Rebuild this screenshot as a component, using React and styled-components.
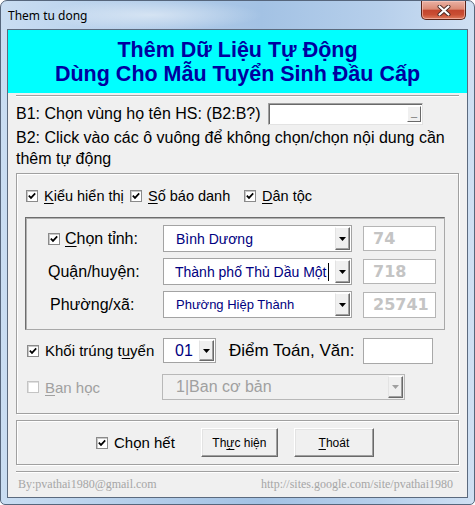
import styled, { createGlobalStyle } from 'styled-components'

const GlobalStyle = createGlobalStyle`
  html, body {
    margin: 0;
    padding: 0;
    background: #ffffff;
  }
  body {
    width: 475px;
    height: 505px;
    overflow: hidden;
    font-family: "Liberation Sans", Arial, sans-serif;
  }
`

const Window = styled.div`
  width: 475px;
  height: 505px;
  box-sizing: border-box;
  border: 1px solid #56667c;
  border-radius: 7px 7px 5px 5px;
  background:
    radial-gradient(ellipse 160px 22px at 150px 14px, rgba(255, 255, 255, 0.45), rgba(255, 255, 255, 0) 70%),
    linear-gradient(to right, #c9ddf2 0%, #b7d0eb 25%, #a3c2e4 55%, #b6cfeb 80%, #cfe0f3 100%);
  display: flex;
  flex-direction: column;
  overflow: hidden;
`

const TitleBar = styled.div`
  height: 28px;
  display: flex;
  align-items: flex-start;
  padding-left: 7px;
`

const TitleText = styled.div`
  font-family: "Noto Sans", "Open Sans", sans-serif;
  font-size: 12px;
  line-height: 16px;
  margin-top: 7px;
  color: #000;
`

const CloseButton = styled.div`
  margin-left: auto;
  margin-right: 8px;
  width: 45px;
  height: 19px;
  box-sizing: border-box;
  border: 1px solid #5a2418;
  border-top: none;
  border-radius: 0 0 5px 5px;
  background: linear-gradient(#eab1a4 0%, #dc8a74 45%, #c3452d 52%, #c94e33 75%, #de7c5e 100%);
  box-shadow: inset 0 0 0 1px rgba(255, 210, 200, 0.55);
  display: flex;
  align-items: center;
  justify-content: center;
`

const Client = styled.div`
  flex: 1;
  margin: 0 6px 6px;
  border: 1px solid #5b6a7e;
  background: #f0f0f0;
  display: flex;
  flex-direction: column;
`

const Banner = styled.div`
  background: #00ffff;
  padding: 8px 0 7px;
  text-align: center;
  color: #0000a0;
  font-weight: bold;
  font-size: 21.5px;
  line-height: 24px;
`

const Etched = styled.div`
  height: 0;
  border-top: 1px solid #a0a0a0;
  border-bottom: 1px solid #ffffff;
  margin: ${p => p.$top || 0}px 8px 0;
`

const Body = styled.div`
  padding: 0 8px;
  display: flex;
  flex-direction: column;
`

const B1Row = styled.div`
  margin-top: 6px;
  height: 22px;
  display: flex;
  align-items: center;
  font-size: 16px;
  color: #000;
`

const RangeInput = styled.div`
  margin-left: auto;
  margin-right: 36px;
  width: 155px;
  height: 22px;
  box-sizing: border-box;
  background: #fff;
  border: 1px solid;
  border-color: #a0a0a0 #e3e3e3 #e3e3e3 #a0a0a0;
  box-shadow: inset 1px 1px 0 #696969;
  display: flex;
  justify-content: flex-end;
  align-items: center;
  padding-right: 1px;
`

const SmallButton = styled.div`
  width: 14px;
  height: 16px;
  box-sizing: border-box;
  background: #f0f0f0;
  border: 1px solid;
  border-color: #ffffff #696969 #696969 #ffffff;
  font-size: 11px;
  font-weight: bold;
  line-height: 10px;
  text-align: center;
  color: #000;
`

const Note = styled.div`
  margin-top: 2px;
  font-size: 16px;
  line-height: 21px;
  color: #000;
`

const Frame = styled.div`
  margin-top: ${p => p.$top}px;
  height: ${p => p.$height}px;
  box-sizing: border-box;
  border: 1px solid #a0a0a0;
  box-shadow: inset 1px 1px 0 #ffffff, 1px 1px 0 #ffffff;
  display: flex;
  flex-direction: ${p => (p.$row ? 'row' : 'column')};
  align-items: ${p => (p.$row ? 'center' : 'stretch')};
  padding: ${p => p.$pad};
`

const CheckRow = styled.div`
  height: 18px;
  display: flex;
  align-items: center;
`

const CheckLabel = styled.label`
  display: flex;
  align-items: center;
  gap: ${p => p.$gap || 6}px;
  width: ${p => (p.$width ? `${p.$width}px` : 'auto')};
  flex-shrink: 0;
  font-size: ${p => p.$size || 16}px;
  color: ${p => (p.$disabled ? '#a0a0a0' : '#000')};
  white-space: nowrap;
`

const Box = styled.span`
  width: 12px;
  height: 12px;
  box-sizing: border-box;
  flex-shrink: 0;
  background: #fff;
  border: 1px solid ${p => (p.$disabled ? '#c4c4c4' : '#8a8a8a')};
  box-shadow: inset 1px 1px 0 ${p => (p.$disabled ? '#e0e0e0' : '#c8c8c8')};
  display: flex;
  align-items: center;
  justify-content: center;
`

const Key = styled.span`
  text-decoration: underline;
  text-underline-offset: 2px;
  text-decoration-thickness: 1px;
`

const InnerFrame = styled.div`
  margin: 12px 0 0 -1px;
  width: 420px;
  height: 113px;
  box-sizing: border-box;
  border: 1px solid;
  border-color: #6d6d6d #a8a8a8 #a8a8a8 #6d6d6d;
  box-shadow: inset 1px 1px 0 #b0b0b0;
  padding: 7px 0 0 22px;
  display: grid;
  grid-template-columns: 104px 189px 73px;
  grid-auto-rows: 27px;
  column-gap: 11px;
  row-gap: 6px;
  align-items: center;
`

const FieldLabel = styled.div`
  font-size: 16px;
  color: #000;
  padding-left: ${p => p.$indent || 0}px;
  white-space: nowrap;
`

const Combo = styled.div`
  width: ${p => (p.$width ? `${p.$width}px` : 'auto')};
  height: ${p => p.$height || 27}px;
  box-sizing: border-box;
  flex-shrink: 0;
  background: ${p => (p.$disabled ? '#f0f0f0' : '#fff')};
  border: 1px solid ${p => (p.$disabled ? '#b8b8b8' : '#a3a3a3')};
  display: flex;
  align-items: center;
  padding: 1px;
`

const ComboText = styled.div`
  flex: 1;
  padding-left: ${p => p.$pad || 11}px;
  font-size: ${p => p.$size || 14}px;
  color: ${p => (p.$disabled ? '#a0a0a0' : '#000080')};
  white-space: nowrap;
  overflow: hidden;
  display: flex;
  align-items: center;
`

const Caret = styled.span`
  width: 1px;
  height: 18px;
  background: #000;
  margin-left: 1px;
`

const ArrowButton = styled.div`
  width: 15px;
  height: 100%;
  box-sizing: border-box;
  background: #f0f0f0;
  border: 1px solid;
  border-color: #ffffff #696969 #696969 #e3e3e3;
  box-shadow: inset -1px -1px 0 #a0a0a0;
  display: flex;
  align-items: center;
  justify-content: center;
`

const NumberBox = styled.div`
  height: ${p => p.$height || 25}px;
  box-sizing: border-box;
  background: #fff;
  border: 1px solid #b5b5b5;
  padding-left: 9px;
  display: flex;
  align-items: center;
  font-family: "DejaVu Sans", Verdana, sans-serif;
  font-weight: bold;
  font-size: 16px;
  color: #c4c4c4;
`

const FieldRow = styled.div`
  margin-top: ${p => p.$top}px;
  height: ${p => p.$height}px;
  display: flex;
  align-items: center;
  padding-left: 1px;
`

const ScoreLabel = styled.div`
  width: 134px;
  margin-left: 13px;
  font-size: 17px;
  color: #000;
  white-space: nowrap;
`

const ScoreInput = styled.div`
  width: 70px;
  height: 26px;
  box-sizing: border-box;
  background: #fff;
  border: 1px solid #a8a8a8;
`

const PushButton = styled.div`
  width: ${p => p.$width}px;
  height: 29px;
  margin-left: ${p => p.$left}px;
  box-sizing: border-box;
  background: #f0f0f0;
  border: 1px solid;
  border-color: #ffffff #696969 #696969 #ffffff;
  box-shadow: inset -1px -1px 0 #a0a0a0, inset 1px 1px 0 #e3e3e3;
  display: flex;
  align-items: center;
  justify-content: center;
  font-family: "Liberation Sans", Arial, sans-serif;
  font-size: 12px;
  color: #000;
`

const Footer = styled.div`
  margin-top: 4px;
  padding: 0 6px 0 2px;
  display: flex;
  justify-content: space-between;
  font-family: "Liberation Serif", "Times New Roman", serif;
  font-size: 12px;
  line-height: 15px;
  color: #a6a6a6;
`

const Tick = () => (
  <svg width="8" height="8" viewBox="0 0 8 8">
    <path d="M0.8 3.6 L3 5.9 L7.2 1.4" fill="none" stroke="#000" strokeWidth="1.7" />
  </svg>
)

const Check = ({ checked = true, disabled, children, ...rest }) => (
  <CheckLabel $disabled={disabled} {...rest}>
    <Box $disabled={disabled}>{checked && <Tick />}</Box>
    <span>{children}</span>
  </CheckLabel>
)

const Arrow = ({ disabled }) => (
  <ArrowButton>
    <svg width="7" height="4" viewBox="0 0 7 4">
      <path d="M0 0 H7 L3.5 4 Z" fill={disabled ? '#a0a0a0' : '#000'} />
    </svg>
  </ArrowButton>
)

const App = () => {
  return (
    <>
      <GlobalStyle />
      <Window>
        <TitleBar>
          <TitleText>Them tu dong</TitleText>
          <CloseButton>
            <svg width="14" height="11" viewBox="0 0 14 11">
              <path d="M2.5 1.5 L11.5 9.5 M11.5 1.5 L2.5 9.5" stroke="#4a2a24" strokeWidth="4" strokeLinecap="round" />
              <path d="M2.5 1.5 L11.5 9.5 M11.5 1.5 L2.5 9.5" stroke="#ffffff" strokeWidth="2.2" strokeLinecap="round" />
            </svg>
          </CloseButton>
        </TitleBar>

        <Client>
          <Banner>
            <div>Thêm Dữ Liệu Tự Động</div>
            <div>Dùng Cho Mẫu Tuyển Sinh Đầu Cấp</div>
          </Banner>
          <Etched $top={2} />

          <Body>
            <B1Row>
              <span>B1: Chọn vùng họ tên HS: (B2:B?)</span>
              <RangeInput>
                <SmallButton>_</SmallButton>
              </RangeInput>
            </B1Row>
            <Note>B2: Click vào các ô vuông để không chọn/chọn nội dung cần thêm tự động</Note>

            <Frame $top={4} $height={241} $pad="13px 0 0 9px">
              <CheckRow>
                <Check $size={14.5} $width={104}><Key>K</Key>iểu hiển thị</Check>
                <Check $size={14.5} $width={114}><Key>S</Key>ố báo danh</Check>
                <Check $size={14.5}><Key>D</Key>ân tộc</Check>
              </CheckRow>

              <InnerFrame>
                <Check $size={16} $gap={5}><Key>C</Key>họn tỉnh:</Check>
                <Combo>
                  <ComboText>Bình Dương</ComboText>
                  <Arrow />
                </Combo>
                <NumberBox>74</NumberBox>

                <FieldLabel>Quận/huyện:</FieldLabel>
                <Combo>
                  <ComboText $pad={10}>Thành phố Thủ Dầu Một<Caret /></ComboText>
                  <Arrow />
                </Combo>
                <NumberBox>718</NumberBox>

                <FieldLabel $indent={2}>Phường/xã:</FieldLabel>
                <Combo>
                  <ComboText $size={13}>Phường Hiệp Thành</ComboText>
                  <Arrow />
                </Combo>
                <NumberBox $height={26}>25741</NumberBox>
              </InnerFrame>

              <FieldRow $top={8} $height={25}>
                <Check $width={136} $size={15}>Khối trúng t<Key>u</Key>yển</Check>
                <Combo $width={53} $height={25}>
                  <ComboText $pad={10} $size={16}>01</ComboText>
                  <Arrow />
                </Combo>
                <ScoreLabel>Điểm Toán, Văn:</ScoreLabel>
                <ScoreInput />
              </FieldRow>

              <FieldRow $top={11} $height={26}>
                <Check $width={135} $size={15} checked={false} disabled><Key>B</Key>an học</Check>
                <Combo $width={243} $height={26} $disabled>
                  <ComboText $pad={12} $size={16} $disabled>1|Ban cơ bản</ComboText>
                  <Arrow disabled />
                </Combo>
              </FieldRow>
            </Frame>

            <Frame $top={6} $height={45} $row $pad="0 0 0 79px">
              <Check $size={15} $gap={6}>Chọn hết</Check>
              <PushButton $width={77} $left={26}>Th<Key>ự</Key>c hiện</PushButton>
              <PushButton $width={80} $left={16}><Key>T</Key>hoát</PushButton>
            </Frame>
          </Body>

          <Etched $top={6} />
          <Body>
            <Footer>
              <span>By:pvathai1980@gmail.com</span>
              <span>http://sites.google.com/site/pvathai1980</span>
            </Footer>
          </Body>
        </Client>
      </Window>
    </>
  )
}

export default App
